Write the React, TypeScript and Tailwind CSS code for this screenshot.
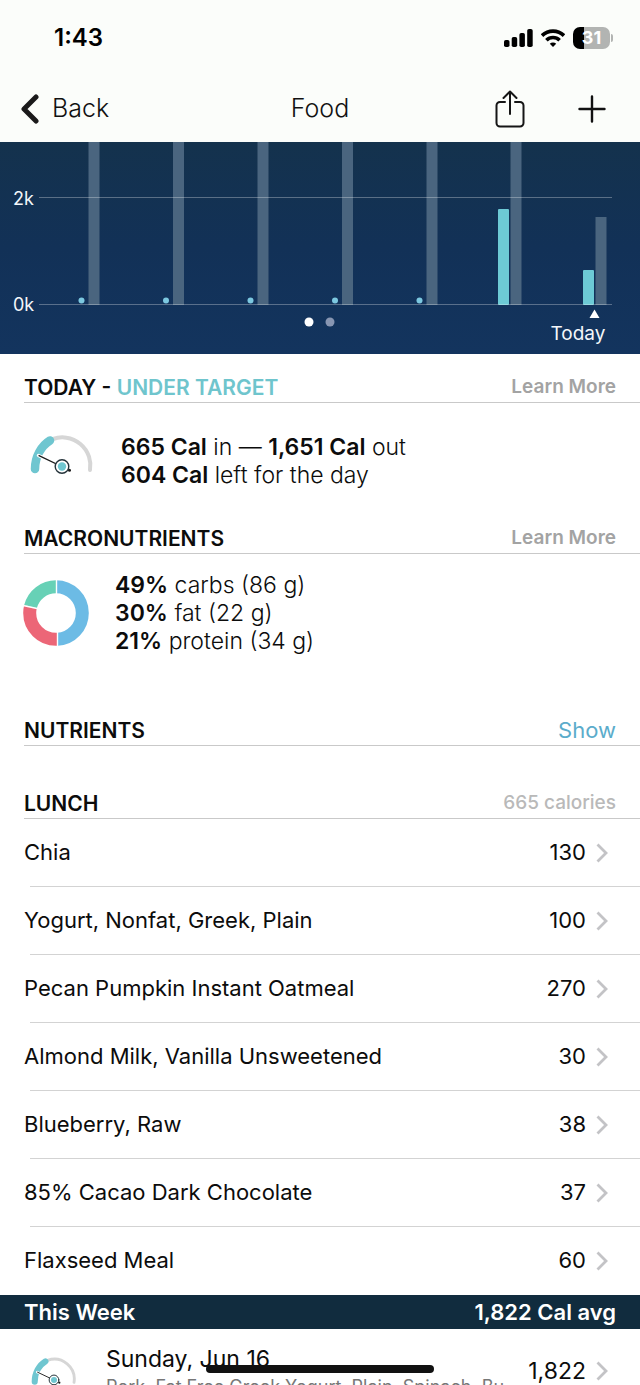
import { clsx } from "clsx";

const foods = [
  { name: "Chia", calories: 130 },
  { name: "Yogurt, Nonfat, Greek, Plain", calories: 100 },
  { name: "Pecan Pumpkin Instant Oatmeal", calories: 270 },
  { name: "Almond Milk, Vanilla Unsweetened", calories: 30 },
  { name: "Blueberry, Raw", calories: 38 },
  { name: "85% Cacao Dark Chocolate", calories: 37 },
  { name: "Flaxseed Meal", calories: 60 },
];

// x is the left edge of the "in" bar, heights are measured up from the 0k line
const days = [
  { x: 76, eaten: 0, burned: 163 },
  { x: 160.5, eaten: 0, burned: 163 },
  { x: 245, eaten: 0, burned: 163 },
  { x: 329.5, eaten: 0, burned: 163 },
  { x: 414, eaten: 0, burned: 163 },
  { x: 498, eaten: 96, burned: 163 },
  { x: 583, eaten: 35, burned: 88 },
];

function StatusBar() {
  return (
    <div className="flex h-[76px] items-center justify-between pr-[27px] pl-[54px]">
      <span className="text-[24px] font-semibold text-black">1:43</span>
      <div className="flex items-center gap-2">
        <svg width="29" height="18" viewBox="0 0 29 18" fill="#000">
          <rect x="0" y="11" width="5.5" height="7" rx="1.8" />
          <rect x="7.7" y="8" width="5.5" height="10" rx="1.8" />
          <rect x="15.4" y="4" width="5.5" height="14" rx="1.8" />
          <rect x="23.2" y="0" width="5.5" height="18" rx="1.8" />
        </svg>
        <svg width="24" height="18" viewBox="0 0 24 18" fill="none" stroke="#000" strokeWidth="3.6">
          <path d="M1 6.6a15.8 15.8 0 0 1 22 0" />
          <path d="M5.4 11.2a9.4 9.4 0 0 1 13.200 0" />
          <path d="M12 18l-3.200-3.300a4.600 4.600 0 0 1 6.400 0z" fill="#000" stroke="none" />
        </svg>
        <div className="flex items-center gap-px">
          <div className="flex h-[22px] w-[37px] items-center justify-center rounded-[7px] bg-linear-to-r from-black from-31% to-[#b2b4b2] to-31%">
            <span className="text-[18px] leading-none font-bold text-white">31</span>
          </div>
          <div className="h-2 w-0.5 rounded-r-full bg-[#b2b4b2]" />
        </div>
      </div>
    </div>
  );
}

function NavBar() {
  return (
    <nav className="grid h-[66px] grid-cols-3 items-center pr-[34px] pl-5 text-[25px] font-light text-[#111]">
      <button className="flex items-center gap-3 justify-self-start">
        <svg width="20" height="30" viewBox="0 0 20 30" fill="none" stroke="#1a1a1a" strokeWidth="5" strokeLinecap="round" strokeLinejoin="round">
          <path d="M16 3L4 15l12 12" />
        </svg>
        Back
      </button>
      <h1 className="pl-3.5 text-center">Food</h1>
      <div className="flex items-center justify-end gap-[53px]">
        <button aria-label="Share">
          <svg width="30" height="38" viewBox="0 0 30 38" fill="none" stroke="#151515" strokeWidth="2" strokeLinecap="round" strokeLinejoin="round">
            <path d="M10 12H5a3.5 3.5 0 0 0-3.5 3.5V33A3.5 3.5 0 0 0 5 36.5h20a3.5 3.5 0 0 0 3.5-3.5V15.5A3.5 3.5 0 0 0 25 12h-5" />
            <path d="M15 24V1.5M8.5 8L15 1.5 21.5 8" />
          </svg>
        </button>
        <button aria-label="Add food">
          <svg width="28" height="28" viewBox="0 0 28 28" fill="none" stroke="#111" strokeWidth="2.4" strokeLinecap="round">
            <path d="M14 1.5v25M1.5 14h25" />
          </svg>
        </button>
      </div>
    </nav>
  );
}

function CalorieChart() {
  return (
    <svg viewBox="0 0 640 212" className="block w-full font-[Inter,sans-serif]" role="img" aria-label="Calories in and out">
      <defs>
        <linearGradient id="sky" x1="0" y1="0" x2="0" y2="1">
          <stop offset="0" stopColor="#14324d" />
          <stop offset="0.5" stopColor="#123157" />
          <stop offset="1" stopColor="#13345e" />
        </linearGradient>
      </defs>
      <rect width="640" height="212" fill="url(#sky)" />
      {days.map((day) => (
        <g key={day.x}>
          <rect x={day.x + 12.5} y={163 - day.burned} width="11" height={day.burned} fill="#4a657f" />
          {day.eaten > 0 ? (
            <rect x={day.x} y={163 - day.eaten} width="11" height={day.eaten} rx="1" fill="#6dcad5" />
          ) : (
            <circle cx={day.x + 5.5} cy="158.5" r="3" fill="#7cc8e0" />
          )}
        </g>
      ))}
      <path d="M39 55.5H612M39 162.5H612" stroke="#fff" strokeOpacity="0.3" />
      <g fill="#f4f7fa" fontSize="18">
        <text x="13" y="63">2k</text>
        <text x="13" y="169">0k</text>
        <text x="578" y="198" fontSize="19" textAnchor="middle">Today</text>
      </g>
      <circle cx="309" cy="180" r="4.5" fill="#fff" />
      <circle cx="330" cy="180" r="4.5" fill="#8896b2" />
      <path d="M594.5 167.500l5 8.500h-10z" fill="#fff" />
    </svg>
  );
}

function Gauge({ className }: { className?: string }) {
  return (
    <svg viewBox="0 0 64 42" className={className} fill="none" strokeLinecap="round">
      <path d="M23 6A28 28 0 0 1 60 37" stroke="#d6d6d6" strokeWidth="4" />
      <path d="M5 36C5 24 11 13 20 7.5" stroke="#6fc6d0" strokeWidth="8.5" />
      <path d="M8.5 22.5L32 33.5" stroke="#fff" strokeWidth="3.5" />
      <path d="M9 22.7L39 37" stroke="#1c1c1c" strokeWidth="1.3" />
      <circle cx="39.5" cy="37.3" r="1.5" fill="#1c1c1c" />
      <circle cx="32" cy="33.5" r="6.8" fill="#fff" stroke="#25333a" strokeWidth="1.4" />
      <circle cx="32" cy="33.5" r="4.2" fill="#6fc6d0" />
    </svg>
  );
}

function MacroRing() {
  return (
    <svg viewBox="0 0 66 66" className="size-[66px]">
      <g fill="none" strokeWidth="13" transform="rotate(-90 33 33)">
        <circle cx="33" cy="33" r="26.3" stroke="#6cbbe5" pathLength="100" strokeDasharray="49 51" />
        <circle cx="33" cy="33" r="26.3" stroke="#ec6677" pathLength="100" strokeDasharray="30 70" strokeDashoffset="-49" />
        <circle cx="33" cy="33" r="26.3" stroke="#67d1b6" pathLength="100" strokeDasharray="21 79" strokeDashoffset="-79" />
      </g>
      <path d="M33.5 0v20M34.5 46v20M0 25.5l14 3" stroke="#fff" strokeWidth="1.4" />
    </svg>
  );
}

function Chevron() {
  return (
    <svg width="12" height="20" viewBox="0 0 12 20" fill="none" stroke="#c3c3c6" strokeWidth="2.8">
      <path d="M1.5 1.5L10 10l-8.5 8.5" />
    </svg>
  );
}

function SectionHeader({ title, children }: { title: React.ReactNode; children: React.ReactNode }) {
  return (
    <div className="ml-6 flex h-8 items-center justify-between border-b border-[#c9c9c9] pt-0.5 pr-6">
      <h2 className="text-[21px] font-semibold">{title}</h2>
      {children}
    </div>
  );
}

function LearnMore() {
  return (
    <a href="#learn-more" className="text-[19px] font-semibold text-[#a3a3a3]">
      Learn More
    </a>
  );
}

export default function App() {
  return (
    <div className="relative flex h-screen flex-col overflow-hidden bg-white font-[Inter,sans-serif] text-[#0c0c0c]">
      <header className="shrink-0 bg-[#fbfdfa]">
        <StatusBar />
        <NavBar />
      </header>

      <main className="shrink-0">
        <CalorieChart />

        <section className="pt-[17px]">
          <SectionHeader
            title={
              <>
                TODAY - <span className="text-[#6fc5cd]">UNDER TARGET</span>
              </>
            }
          >
            <LearnMore />
          </SectionHeader>
          <div className="flex items-start gap-[27px] pt-[30px] pb-[33px] pl-[30px]">
            <Gauge className="h-[42px] w-16" />
            <p className="text-[23px] leading-7 font-light">
              <b className="font-semibold">665 Cal</b> in — <b className="font-semibold">1,651 Cal</b> out
              <br />
              <b className="font-semibold">604 Cal</b> left for the day
            </p>
          </div>
        </section>

        <section>
          <SectionHeader title="MACRONUTRIENTS">
            <LearnMore />
          </SectionHeader>
          <div className="flex items-center gap-[26px] pt-[17px] pb-[59px] pl-[23px]">
            <MacroRing />
            <ul className="text-[23px] leading-7 font-light">
              <li><b className="font-semibold">49%</b> carbs (86 g)</li>
              <li><b className="font-semibold">30%</b> fat (22 g)</li>
              <li><b className="font-semibold">21%</b> protein (34 g)</li>
            </ul>
          </div>
        </section>

        <section className="pb-[41px]">
          <SectionHeader title="NUTRIENTS">
            <button className="text-[22px] text-[#5baccb]">Show</button>
          </SectionHeader>
        </section>

        <section>
          <SectionHeader title="LUNCH">
            <span className="text-[19px] font-medium text-[#b9b9b9]">665 calories</span>
          </SectionHeader>
          <ul>
            {foods.map((food, i) => (
              <li key={food.name} className="pl-6">
                <a href="#food" className="flex h-[67px] items-center pr-8 text-[22px]">
                  <span className="flex-1">{food.name}</span>
                  <span className="mr-2.5">{food.calories}</span>
                  <Chevron />
                </a>
                <div className={clsx("ml-1.5 h-px", i < foods.length - 1 && "bg-[#d3d3d3]")} />
              </li>
            ))}
          </ul>
        </section>

        <section>
          <div className="flex h-[34px] items-center justify-between bg-[#112c3e] px-6 text-[22px] font-semibold text-white">
            <h2>This Week</h2>
            <span>1,822 Cal avg</span>
          </div>
          <a href="#sunday" className="flex h-[84px] items-center pr-8 pl-[31px]">
            <Gauge className="mr-[29px] h-[30px] w-[46px]" />
            <div className="min-w-0 flex-1 pt-1 pr-4">
              <div className="text-[23px] leading-7">Sunday, Jun 16</div>
              <div className="overflow-hidden text-[18px] leading-7 whitespace-nowrap text-[#777]">
                Pork, Fat Free Greek Yogurt, Plain, Spinach, Bu...
              </div>
            </div>
            <span className="mr-2.5 text-[23px]">1,822</span>
            <Chevron />
          </a>
        </section>
      </main>

      {/* home indicator */}
      <div className="absolute bottom-3 left-1/2 h-2 w-[228px] -translate-x-1/2 rounded-full bg-[#111]" />
    </div>
  );
}
